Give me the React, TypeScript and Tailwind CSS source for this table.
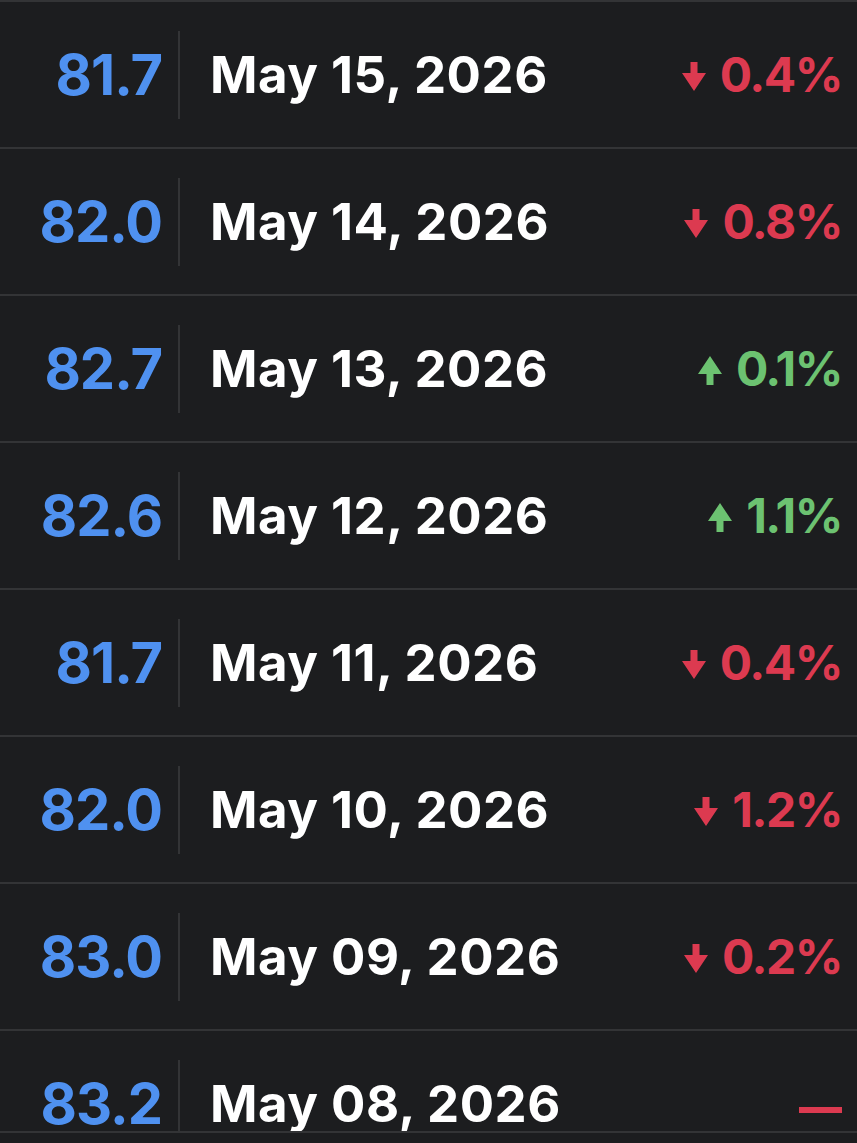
import React from "react";

type Row = {
  value: string;
  date: string;
  change: string;
  dir: "down" | "up" | "none";
};

const rows: Row[] = [
  { value: "81.7", date: "May 15, 2026", change: "0.4%", dir: "down" },
  { value: "82.0", date: "May 14, 2026", change: "0.8%", dir: "down" },
  { value: "82.7", date: "May 13, 2026", change: "0.1%", dir: "up" },
  { value: "82.6", date: "May 12, 2026", change: "1.1%", dir: "up" },
  { value: "81.7", date: "May 11, 2026", change: "0.4%", dir: "down" },
  { value: "82.0", date: "May 10, 2026", change: "1.2%", dir: "down" },
  { value: "83.0", date: "May 09, 2026", change: "0.2%", dir: "down" },
  { value: "83.2", date: "May 08, 2026", change: "", dir: "none" },
];

const Arrow = ({ dir }: { dir: "down" | "up" }) => (
  <svg width="24" height="29" viewBox="0 0 24 29" className="shrink-0 mt-[3px]">
    {dir === "down" ? (
      <path d="M8.5 0h7v11h8.5L12 29 0 11h8.5z" fill="currentColor" />
    ) : (
      <path d="M8.5 29h7V18h8.5L12 0 0 18h8.5z" fill="currentColor" />
    )}
  </svg>
);

const ChangeCell = ({ row }: { row: Row }) => {
  if (row.dir === "none") {
    return <div className="w-[43px] h-[6px] bg-[#dc3a50] mt-[12px]" />;
  }
  const color = row.dir === "down" ? "text-[#dc3a50]" : "text-[#6cc271]";
  return (
    <div className={`flex items-center gap-[14px] ${color}`}>
      <Arrow dir={row.dir} />
      <span>{row.change}</span>
    </div>
  );
};

export default function App() {
  return (
    <div
      className="relative h-[1143px] overflow-hidden bg-[#1c1d1f] border-t-2 border-[#333436]"
      style={{ fontFamily: "Inter, 'Liberation Sans', sans-serif" }}
    >
      {rows.map((row, i) => (
        <div
          key={i}
          className="h-[147px] flex items-center border-b-2 border-[#333436] font-bold"
        >
          {/* value */}
          <div className="w-[162px] text-right text-[#4f91f0] text-[56px] tracking-[-1px] leading-none">
            {row.value}
          </div>
          <div className="ml-[16px] w-[2px] h-[88px] bg-[#333436]" />
          {/* date */}
          <div className="ml-[30px] text-white text-[51px] leading-none tracking-[0.5px]">
            {row.date}
          </div>
          {/* change */}
          <div className="flex-1 flex justify-end pr-[15px] text-[48px] leading-none tracking-[-1.5px]">
            <ChangeCell row={row} />
          </div>
        </div>
      ))}
      {/* bottom bar edge */}
      <div className="absolute left-0 right-0 bottom-0 h-[12px] bg-[#1c1d1f] border-t-2 border-[#333436]" />
    </div>
  );
}
